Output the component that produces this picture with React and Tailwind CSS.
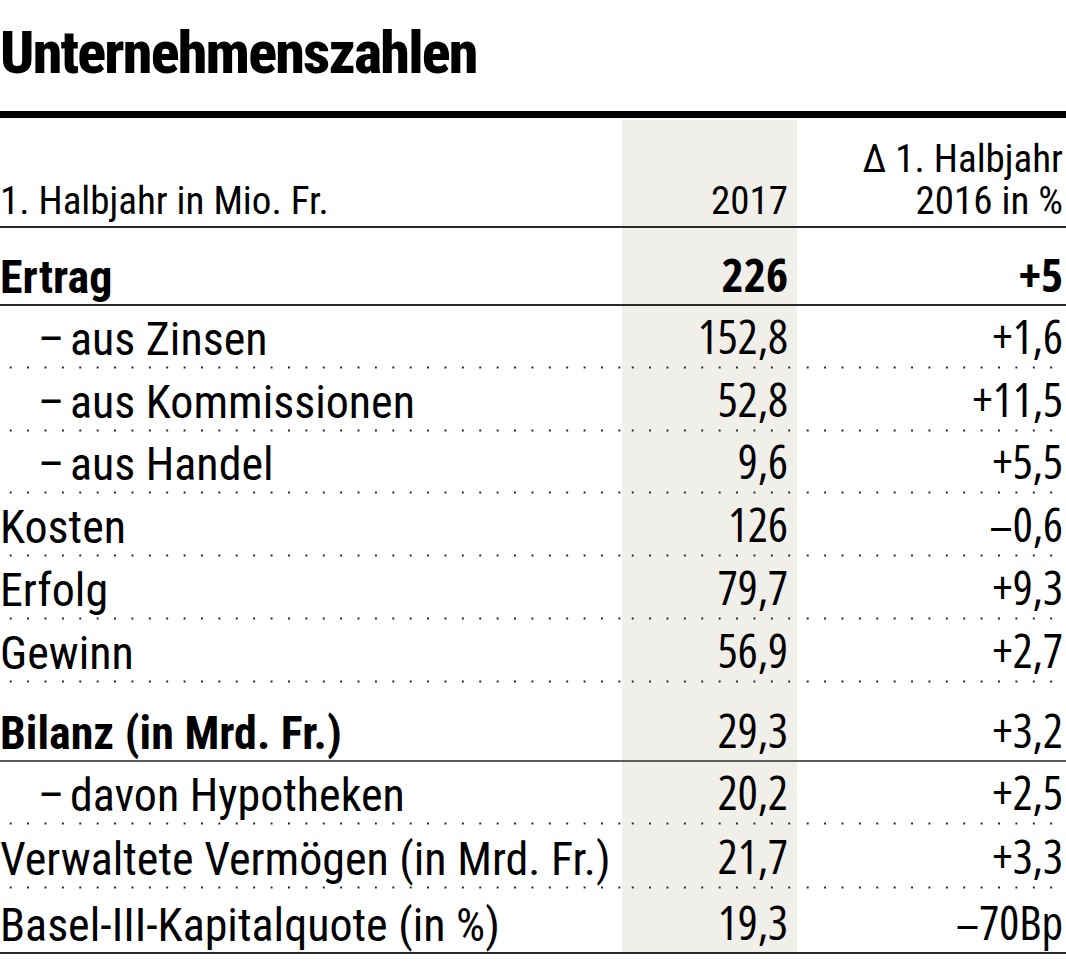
import React from "react";

const rows = [
  { label: "Ertrag", v1: "226", v2: "+5", bold: true, h: "h-[78px]", line: "solid" },
  { label: "– aus Zinsen", v1: "152,8", v2: "+1,6", indent: true, h: "h-[63px]", line: "dot" },
  { label: "– aus Kommissionen", v1: "52,8", v2: "+11,5", indent: true, h: "h-[63px]", line: "dot" },
  { label: "– aus Handel", v1: "9,6", v2: "+5,5", indent: true, h: "h-[62px]", line: "dot" },
  { label: "Kosten", v1: "126", v2: "–0,6", h: "h-[63px]", line: "dot" },
  { label: "Erfolg", v1: "79,7", v2: "+9,3", h: "h-[63px]", line: "dot" },
  { label: "Gewinn", v1: "56,9", v2: "+2,7", h: "h-[63px]", line: "dot" },
  { label: "Bilanz (in Mrd. Fr.)", v1: "29,3", v2: "+3,2", boldLabel: true, h: "h-[79px]", line: "gray" },
  { label: "– davon Hypotheken", v1: "20,2", v2: "+2,5", indent: true, h: "h-[63px]", line: "dot" },
  { label: "Verwaltete Vermögen (in Mrd. Fr.)", v1: "21,7", v2: "+3,3", h: "h-[64px]", line: "dot" },
  { label: "Basel-III-Kapitalquote (in %)", v1: "19,3", v2: "–70Bp", h: "h-[65px]", line: "solid" },
];

function Line({ type }) {
  if (type === "solid") return <div className="h-[2px] w-full bg-[#2a2a2a]" />;
  if (type === "gray") return <div className="h-[2px] w-full bg-[#5c5c5c]" />;
  return (
    <div className="h-[3px] w-full bg-[image:radial-gradient(circle,#222_0.9px,transparent_1.3px)] bg-[length:17.4px_3px] bg-repeat-x bg-[position:2px_0]" />
  );
}

const num = "font-['Open_Sans',sans-serif] font-stretch-condensed";

function Row({ r }) {
  const labelW = r.bold || r.boldLabel ? "font-bold" : "font-normal";
  const valW = r.bold ? "font-bold" : "font-normal";
  return (
    <div className={`flex ${r.h}`}>
      <div className="flex w-[622px] flex-col">
        <div className={`flex flex-1 items-end whitespace-nowrap pb-[4px] text-[46px] leading-none ${labelW}`}>
          {r.indent ? (
            <span className="flex">
              <span className="w-[70px] pl-[38px]">–</span>
              <span>{r.label.replace("– ", "")}</span>
            </span>
          ) : (
            <span>{r.label}</span>
          )}
        </div>
        <Line type={r.line} />
      </div>
      <div className="flex w-[175px] flex-col bg-[#f0efea]">
        <div className={`flex flex-1 items-end justify-end pb-[6px] pr-[9px] text-[47px] leading-none ${num} ${valW}`}>
          {r.v1}
        </div>
        <Line type={r.line} />
      </div>
      <div className="flex w-[269px] flex-col">
        <div className={`flex flex-1 items-end justify-end pb-[6px] pr-[3px] text-[47px] leading-none ${num} ${valW}`}>
          {r.v2}
        </div>
        <Line type={r.line} />
      </div>
    </div>
  );
}

export default function App() {
  return (
    <div className="relative h-[975px] w-[1066px] bg-white font-['Roboto_Condensed','Liberation_Sans',sans-serif] text-black">
      <div className="h-[111px] pt-[23px] text-[60px] font-extrabold leading-none tracking-[-1.8px]">
        Unternehmenszahlen
      </div>
      <div className="h-[7px] bg-black" />
      <div className="h-[2px]" />
      <div className="flex h-[108px]">
        <div className="flex w-[622px] flex-col">
          <div className="flex flex-1 items-end pb-[4px] text-[39px] leading-[42px]">1. Halbjahr in Mio. Fr.</div>
          <Line type="solid" />
        </div>
        <div className="flex w-[175px] flex-col bg-[#f0efea]">
          <div className="flex flex-1 items-end justify-end pb-[4px] pr-[9px] text-[39px] leading-[42px]">2017</div>
          <Line type="solid" />
        </div>
        <div className="flex w-[269px] flex-col">
          <div className="flex flex-1 flex-col items-end justify-end pb-[4px] pr-[3px] text-right text-[39px] leading-[42px]">
            <span>Δ 1. Halbjahr</span>
            <span>2016 in %</span>
          </div>
          <Line type="solid" />
        </div>
      </div>
      {rows.map((r, i) => (
        <Row key={i} r={r} />
      ))}
    </div>
  );
}
